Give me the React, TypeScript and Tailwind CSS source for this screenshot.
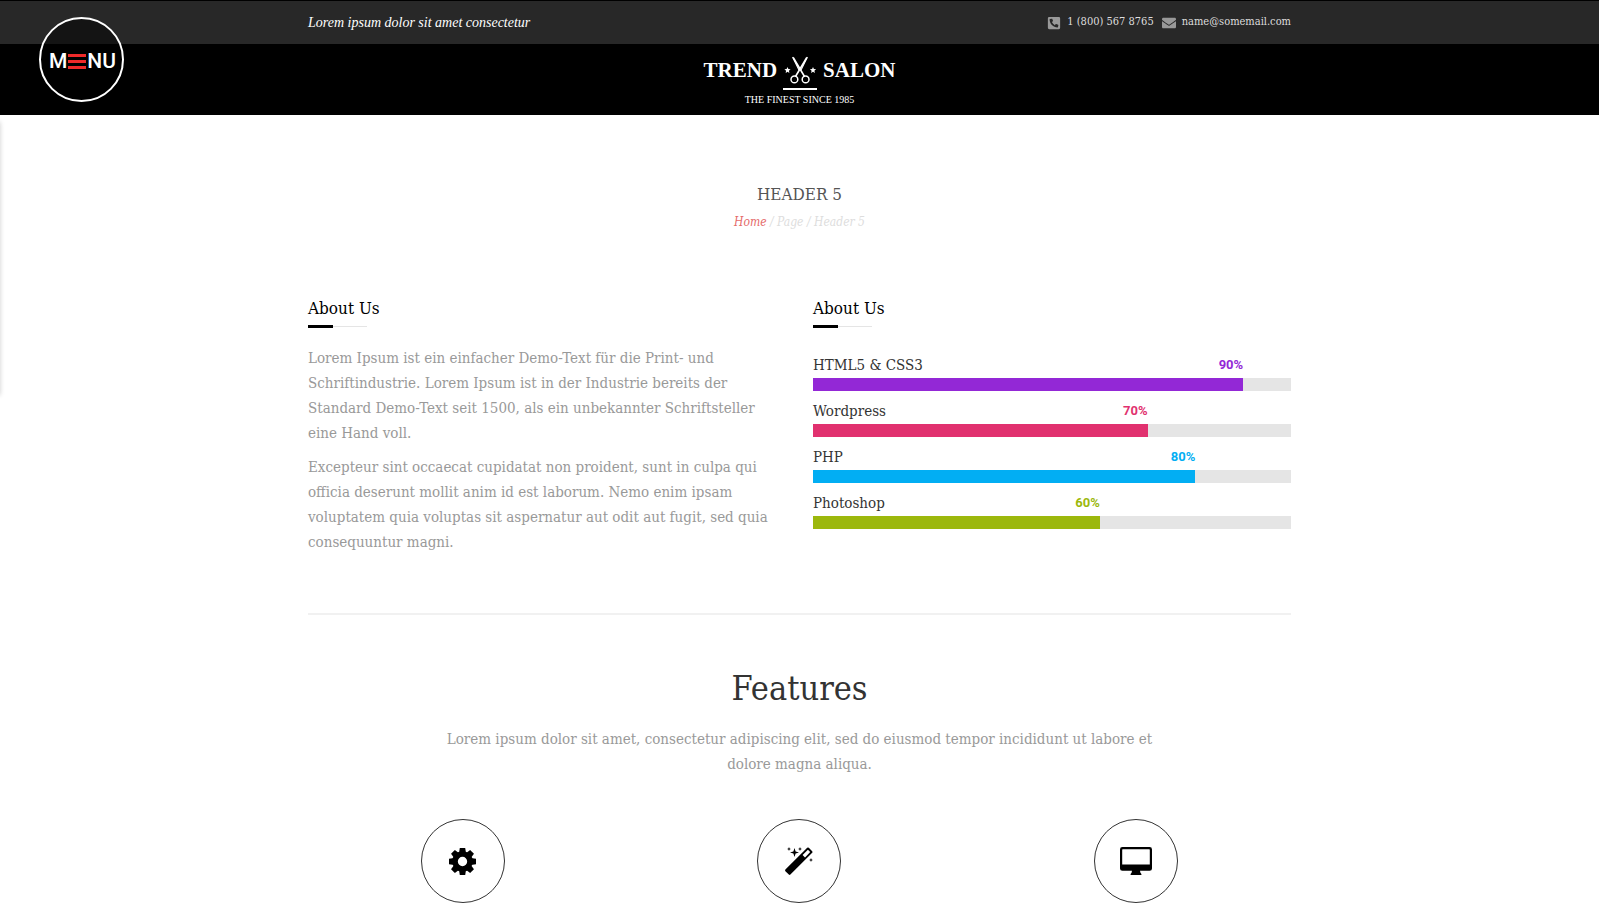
import { FaEnvelope, FaPhoneSquareAlt } from "react-icons/fa";

const slab = "font-['Roboto_Slab','DejaVu_Serif_Condensed','DejaVu_Serif',serif]";

const skills = [
  { name: "HTML5 & CSS3", value: 90, bar: "bg-[#9328d6]", text: "text-[#9328d6]" },
  { name: "Wordpress", value: 70, bar: "bg-[#e1316f]", text: "text-[#e1316f]" },
  { name: "PHP", value: 80, bar: "bg-[#02aef3]", text: "text-[#02aef3]" },
  { name: "Photoshop", value: 60, bar: "bg-[#9cb80d]", text: "text-[#9cb80d]" },
];

function Scissors() {
  return (
    <svg viewBox="0 0 36 28" className="h-7 w-9" fill="none" stroke="#fff" aria-hidden="true">
      <path d="M11.5 2 L22.2 20 M24.5 2 L13.8 20" strokeWidth="1.6" strokeLinecap="round" />
      <path d="M10.6 1 L17 14 M25.4 1 L19 14" strokeWidth="1.2" />
      <circle cx="12.4" cy="23.4" r="3.4" strokeWidth="1.5" />
      <circle cx="23.6" cy="23.4" r="3.4" strokeWidth="1.5" />
      <path
        d="M5.5 11 l.9 2 2.2.2 -1.7 1.5 .5 2.2 -1.9-1.1 -1.9 1.1 .5-2.2 -1.7-1.5 2.2-.2z M31 11 l.9 2 2.2.2 -1.7 1.5 .5 2.2 -1.9-1.1 -1.9 1.1 .5-2.2 -1.7-1.5 2.2-.2z"
        fill="#fff"
        stroke="none"
      />
    </svg>
  );
}

function Gear() {
  return (
    <svg viewBox="-13 -13 26 26" className="size-[27px]" aria-hidden="true">
      <circle r="7.2" fill="none" stroke="#000" strokeWidth="5.4" />
      {[0, 45, 90, 135, 180, 225, 270, 315].map((a) => (
        <path key={a} d="M-3.4 -8 L-2.6 -13 H2.6 L3.4 -8 Z" transform={`rotate(${a})`} />
      ))}
    </svg>
  );
}

function Wand() {
  return (
    <svg viewBox="0 0 28 28" className="size-7" aria-hidden="true">
      <path
        fillRule="evenodd"
        d="M.4 22.6 L22.2 .8 Q23 .2 23.8 .8 L27.2 4.2 Q27.8 5 27.2 5.8 L5.4 27.6 Q4.6 28.2 3.8 27.6 L.4 24.2 Q-.2 23.4 .4 22.6 Z M17.6 8 L20 10.4 L25.2 5.1 L22.9 2.7 Z"
      />
      <path d="M9.5 1 L10.6 4.4 L14 5.5 L10.6 6.6 L9.5 10 L8.4 6.6 L5 5.5 L8.4 4.4 Z" />
      <path d="M4 0 L4.6 1.4 L6 2 L4.6 2.6 L4 4 L3.4 2.6 L2 2 L3.4 1.4 Z M15 0 L15.6 1.4 L17 2 L15.6 2.6 L15 4 L14.4 2.6 L13 2 L14.4 1.4 Z M26 11 L26.6 12.4 L28 13 L26.6 13.6 L26 15 L25.4 13.6 L24 13 L25.4 12.4 Z" />
    </svg>
  );
}

function Desktop() {
  return (
    <svg viewBox="0 0 32 28" className="h-7 w-8" aria-hidden="true">
      <path
        fillRule="evenodd"
        d="M2.4 0 H29.6 Q32 0 32 2.4 V21.4 Q32 23.8 29.6 23.8 H20 Q20.2 26 21.4 27 V28 H10.6 V27 Q11.8 26 12 23.8 H2.4 Q0 23.8 0 21.4 V2.4 Q0 0 2.4 0 Z M2.2 2.8 V17.6 H29.8 V2.8 Q29.8 2.2 29.2 2.2 H2.8 Q2.2 2.2 2.2 2.8 Z"
      />
    </svg>
  );
}

function SectionTitle({ children }: { children: string }) {
  return (
    <div>
      <h2 className="text-[17px] leading-6 text-black">{children}</h2>
      <div className="mt-[5px] flex w-[59px] items-center">
        <span className="h-[3px] w-[25px] bg-black" />
        <span className="h-px flex-1 bg-[#e5e5e5]" />
      </div>
    </div>
  );
}

export default function App() {
  return (
    <div className={`relative min-h-screen bg-white ${slab}`}>
      <header className="relative bg-black">
        <div className="border-t border-black bg-[#282828]">
          <div className="mx-auto flex h-[43px] max-w-[983px] items-center justify-between">
            <p className="font-['Liberation_Serif',serif] text-[14px] text-white italic">
              Lorem ipsum dolor sit amet consectetur
            </p>
            <div className="flex items-center gap-2 text-[11px] text-[#dddddd]">
              <span className="flex items-center gap-[6px]">
                <FaPhoneSquareAlt className="size-[14px] text-[#999999]" />1 (800) 567 8765
              </span>
              <a href="mailto:name@somemail.com" className="flex items-center gap-[6px]">
                <FaEnvelope className="size-[14px] text-[#999999]" />
                name@somemail.com
              </a>
            </div>
          </div>
        </div>
        <a href="#" className="mx-auto flex h-[71px] w-fit flex-col items-center pt-3 font-['Liberation_Serif',serif] text-white">
          <span className="flex items-center gap-[5px] text-[21px] leading-7 font-bold">
            TREND <Scissors /> SALON
          </span>
          <span className="mt-1 h-[2px] w-[34px] bg-white" />
          <span className="mt-1 text-[10px] leading-3">THE FINEST SINCE 1985</span>
        </a>
        <button
          type="button"
          aria-label="Menu"
          className="absolute top-[17px] left-[39px] flex size-[85px] items-center justify-center gap-px rounded-full border-2 border-white bg-black/50 pt-1 pl-[2px] font-['Roboto',sans-serif] text-[21px] font-medium text-white"
        >
          <span>M</span>
          <span className="flex w-[18px] flex-col gap-[3px]">
            <span className="h-[3px] bg-[#ee2a2a]" />
            <span className="h-[3px] bg-[#ee2a2a]" />
            <span className="h-[3px] bg-[#ee2a2a]" />
          </span>
          <span>NU</span>
        </button>
      </header>
      <div className="absolute top-[122px] -left-2 h-[273px] w-2 shadow-[0_0_5px_rgba(0,0,0,0.2)]" />

      <main className="mx-auto max-w-[983px]">
        <section className="pt-[67px] text-center">
          <h1 className="text-[17px] leading-6 font-light text-[#555555]">HEADER 5</h1>
          <nav className="mt-1 text-[12px] leading-6 font-light text-[#dddddd] italic">
            <a href="#" className="text-[#e56a6a]">Home</a> / Page / Header 5
          </nav>
        </section>

        <div className="mt-[62px] grid grid-cols-2 gap-[27px]">
          <section>
            <SectionTitle>About Us</SectionTitle>
            <div className="mt-[18px] flex flex-col gap-[9px] text-[15px] leading-[25px] font-light text-[#999999]">
              <p>
                Lorem Ipsum ist ein einfacher Demo-Text für die Print- und
                Schriftindustrie. Lorem Ipsum ist in der Industrie bereits der
                Standard Demo-Text seit 1500, als ein unbekannter Schriftsteller
                eine Hand voll.
              </p>
              <p>
                Excepteur sint occaecat cupidatat non proident, sunt in culpa qui
                officia deserunt mollit anim id est laborum. Nemo enim ipsam
                voluptatem quia voluptas sit aspernatur aut odit aut fugit, sed quia
                consequuntur magni.
              </p>
            </div>
          </section>
          <section>
            <SectionTitle>About Us</SectionTitle>
            <div className="mt-[24px] flex flex-col gap-[7px]">
              {skills.map((s) => (
                <div key={s.name}>
                  <div className="relative flex h-[26px] items-center">
                    <span className="text-[15px] font-light text-[#333333]">{s.name}</span>
                    <span
                      className={`absolute left-0 text-right font-['Roboto',sans-serif] text-[13px] font-bold ${s.text}`}
                      style={{ width: `${s.value}%` }}
                    >
                      {s.value}%
                    </span>
                  </div>
                  <div
                    className="h-[13px] bg-[#e5e5e5]"
                    role="progressbar"
                    aria-label={s.name}
                    aria-valuenow={s.value}
                  >
                    <div className={`h-full ${s.bar}`} style={{ width: `${s.value}%` }} />
                  </div>
                </div>
              ))}
            </div>
          </section>
        </div>

        <hr className="mt-[58px] border-t-2 border-[#f1f1f1]" />

        <section className="pt-[49px] text-center">
          <h2 className="text-[34px] leading-[48px] font-extralight text-[#333333]">Features</h2>
          <p className="mx-auto mt-[15px] max-w-[740px] text-[15px] leading-[25px] font-light text-[#999999]">
            Lorem ipsum dolor sit amet, consectetur adipiscing elit, sed do eiusmod tempor incididunt ut labore et
            dolore magna aliqua.
          </p>
          <div className="mt-[42px] grid grid-cols-3 gap-[27px]">
            {[Gear, Wand, Desktop].map((Icon, i) => (
              <div key={i} className="flex justify-center">
                <span className="flex size-[84px] items-center justify-center rounded-full border border-[#333333]">
                  <Icon />
                </span>
              </div>
            ))}
          </div>
        </section>
      </main>
    </div>
  );
}
